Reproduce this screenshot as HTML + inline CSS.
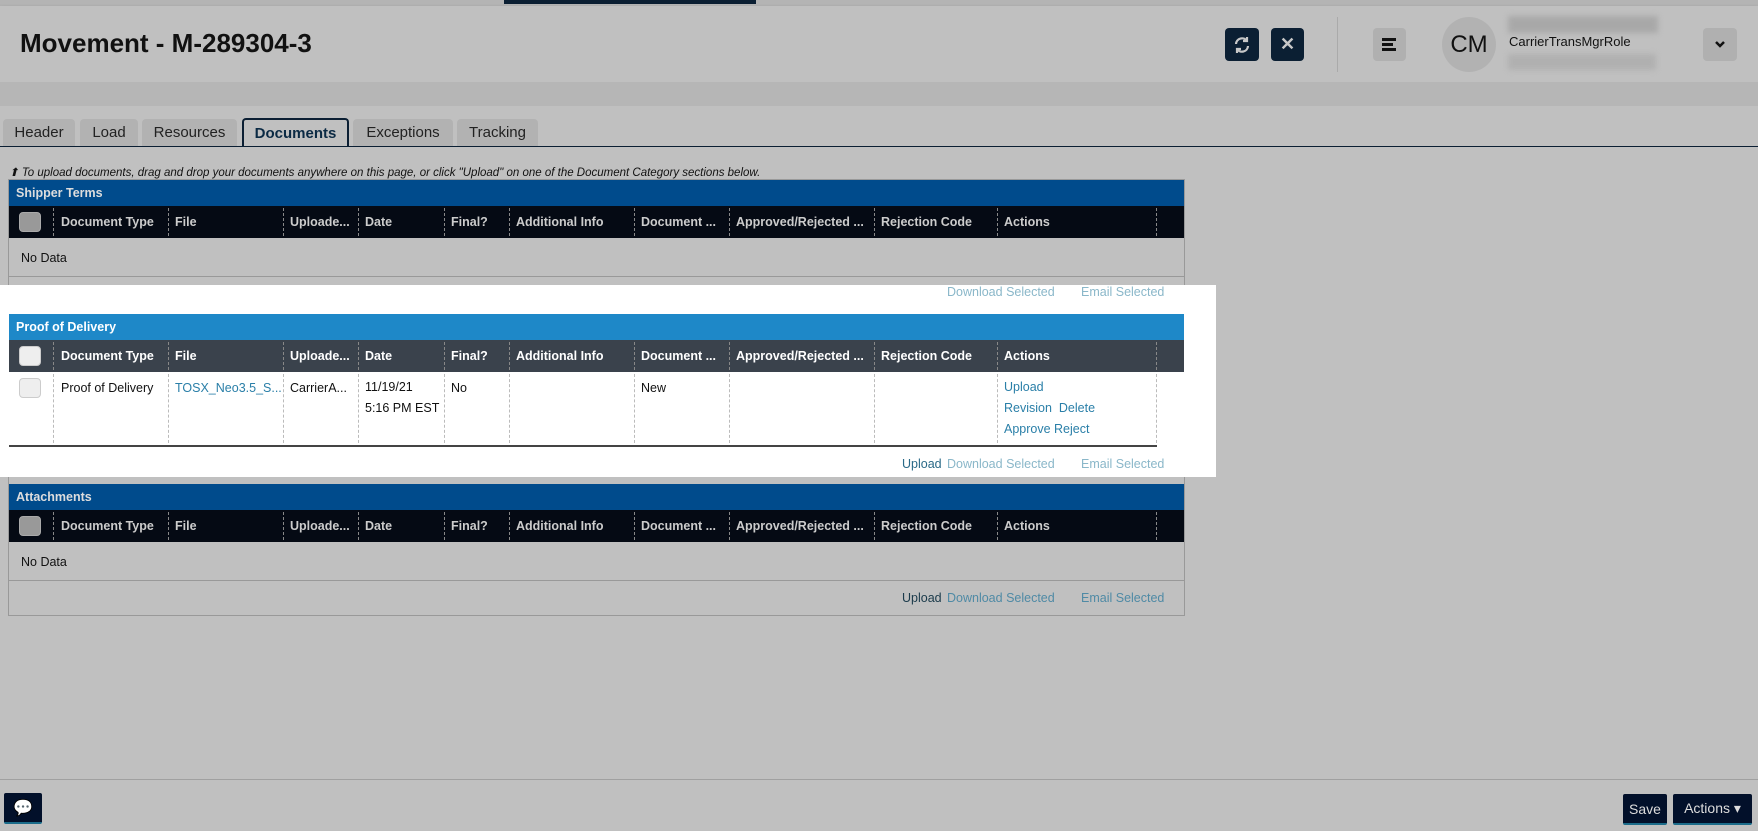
<!DOCTYPE html>
<html><head><meta charset="utf-8"><style>
*{box-sizing:border-box;margin:0;padding:0}
body{width:1758px;height:831px;background:#c0c0c0;font-family:"Liberation Sans",sans-serif;position:relative;overflow:hidden;color:#111}
.a{position:absolute}
.btn{position:absolute;border-radius:4px;background:#0b1f33;color:#c8c8c8;display:flex;align-items:center;justify-content:center}
.tab{position:absolute;top:119px;height:27px;background:#b2b2b2;border-radius:4px 4px 0 0;font-size:15px;color:#222;display:flex;align-items:center;justify-content:center}
.panel{position:absolute;left:9px;width:1175px}
.ph{height:26px;color:#ddd;font-weight:bold;font-size:12.5px;padding:6px 7px}
.ch{height:32px;position:relative;font-weight:bold;font-size:12.5px;color:#ccc}
.ch span,.row span{position:absolute;top:9px;white-space:nowrap}
.col{position:absolute;top:2px;bottom:2px;border-left:1px dashed #888}
.cb{position:absolute;left:10px;top:6px;width:22px;height:20px;border-radius:4px;background:#999;border:1px solid #aaa}
.row{position:relative;font-size:12.5px}
.ft{position:relative;height:30px;font-size:12.5px}
.ft span{position:absolute;top:10px}
.lk{color:#8ab7c9}
</style></head><body>
<div class="a" style="left:0;top:0;width:1758px;height:6px;background:#b4b4b4"></div>
<div class="a" style="left:504px;top:0;width:252px;height:4px;background:#0b1f33"></div>
<div class="a" style="left:0;top:6px;width:1758px;height:76px;background:#c0c0c0;box-shadow:0 2px 4px rgba(0,0,0,.25)"></div>
<div class="a" style="left:0;top:82px;width:1758px;height:24px;background:#b6b6b6"></div>
<div class="a" style="left:20px;top:28px;font-size:26px;font-weight:bold;color:#111">Movement - M-289304-3</div>
<div class="btn" style="left:1225px;top:28px;width:34px;height:33px"><svg width="18" height="18" viewBox="0 0 18 18" fill="none" stroke="#c8c8c8" stroke-width="2.2"><path d="M3 8a6 6 0 0 1 11-3M15 10a6 6 0 0 1-11 3"/><path d="M14 1v4h-4M4 17v-4h4"/></svg></div>
<div class="btn" style="left:1271px;top:28px;width:33px;height:33px;font-weight:bold;font-size:18px">✕</div>
<div class="a" style="left:1337px;top:17px;width:1px;height:55px;background:#aaa"></div>
<div class="a" style="left:1373px;top:28px;width:33px;height:33px;background:#b0b0b0;border-radius:4px"><div class="a" style="left:9px;top:10px;width:14px;height:3px;background:#111"></div><div class="a" style="left:9px;top:15px;width:11px;height:3px;background:#111"></div><div class="a" style="left:9px;top:20px;width:14px;height:3px;background:#111"></div></div>
<div class="a" style="left:1442px;top:17px;width:54px;height:55px;border-radius:50%;background:#b2b2b2;font-size:24px;display:flex;align-items:center;justify-content:center">CM</div>
<div class="a" style="left:1508px;top:16px;width:150px;height:17px;background:#a8a8a8;filter:blur(3px)"></div>
<div class="a" style="left:1509px;top:34px;font-size:13px">CarrierTransMgrRole</div>
<div class="a" style="left:1508px;top:54px;width:148px;height:16px;background:#b0b0b0;filter:blur(3px)"></div>
<div class="a" style="left:1703px;top:28px;width:34px;height:33px;background:#b0b0b0;border-radius:4px"><svg class="a" style="left:11px;top:12px" width="12" height="9" viewBox="0 0 12 9"><path d="M2 2l4 4 4-4" fill="none" stroke="#111" stroke-width="2.5"/></svg></div>

<div class="tab" style="left:3px;width:72px">Header</div>
<div class="tab" style="left:80px;width:58px">Load</div>
<div class="tab" style="left:142px;width:95px">Resources</div>
<div class="tab" style="left:242px;width:107px;background:#c0c0c0;border:2px solid #0b1f33;border-bottom:none;color:#0b2a44;font-weight:bold;height:29px;top:118px">Documents</div>
<div class="tab" style="left:353px;width:100px">Exceptions</div>
<div class="tab" style="left:457px;width:81px">Tracking</div>
<div class="a" style="left:0;top:146px;width:1758px;height:1px;background:#0b1f33"></div>
<div class="a" style="left:9px;top:165px;font-size:11.5px;font-style:italic">⬆ To upload documents, drag and drop your documents anywhere on this page, or click "Upload" on one of the Document Category sections below.</div>

<div class="a" style="left:8px;top:179px;width:1177px;height:437px;border:1px solid #999"></div>
<div class="a" style="left:0;top:285px;width:1216px;height:192px;background:#fff"></div>

<div class="panel" style="top:180px">
<div class="ph" style="background:#004b8c">Shipper Terms</div>
<div class="ch" style="background:#050a14"><div class="cb"></div>
<div class="col" style="left:44px"></div><span style="left:52px">Document Type</span>
<div class="col" style="left:159px"></div><span style="left:166px">File</span>
<div class="col" style="left:274px"></div><span style="left:281px">Uploade...</span>
<div class="col" style="left:349px"></div><span style="left:356px">Date</span>
<div class="col" style="left:435px"></div><span style="left:442px">Final?</span>
<div class="col" style="left:500px"></div><span style="left:507px">Additional Info</span>
<div class="col" style="left:625px"></div><span style="left:632px">Document ...</span>
<div class="col" style="left:720px"></div><span style="left:727px">Approved/Rejected ...</span>
<div class="col" style="left:865px"></div><span style="left:872px">Rejection Code</span>
<div class="col" style="left:988px"></div><span style="left:995px">Actions</span>
<div class="col" style="left:1147px"></div></div>
<div class="row" style="height:39px;border-bottom:1px solid #999"><span style="left:12px;top:13px">No Data</span></div>
<div class="ft"><span class="lk" style="left:938px;top:8px">Download Selected</span><span class="lk" style="left:1072px;top:8px">Email Selected</span></div>
</div>

<div class="panel" style="top:314px">
<div class="ph" style="background:#1e88c8;color:#fff">Proof of Delivery</div>
<div class="ch" style="background:#3a424c;color:#fff"><div class="cb" style="background:#eee;border-color:#ccc"></div>
<div class="col" style="left:44px"></div><span style="left:52px">Document Type</span>
<div class="col" style="left:159px"></div><span style="left:166px">File</span>
<div class="col" style="left:274px"></div><span style="left:281px">Uploade...</span>
<div class="col" style="left:349px"></div><span style="left:356px">Date</span>
<div class="col" style="left:435px"></div><span style="left:442px">Final?</span>
<div class="col" style="left:500px"></div><span style="left:507px">Additional Info</span>
<div class="col" style="left:625px"></div><span style="left:632px">Document ...</span>
<div class="col" style="left:720px"></div><span style="left:727px">Approved/Rejected ...</span>
<div class="col" style="left:865px"></div><span style="left:872px">Rejection Code</span>
<div class="col" style="left:988px"></div><span style="left:995px">Actions</span>
<div class="col" style="left:1147px"></div></div>
<div class="row" style="height:75px;width:1148px;border-bottom:2px solid #444">
<div class="cb" style="top:6px;background:#eee;border-color:#ccc"></div>
<div class="col" style="left:44px;border-color:#bbb"></div><span style="left:52px">Proof of Delivery</span>
<div class="col" style="left:159px;border-color:#bbb"></div><span style="left:166px;color:#2a7fa8">TOSX_Neo3.5_S...</span>
<div class="col" style="left:274px;border-color:#bbb"></div><span style="left:281px">CarrierA...</span>
<div class="col" style="left:349px;border-color:#bbb"></div><span style="left:356px;line-height:21px;top:5px">11/19/21<br>5:16 PM EST</span>
<div class="col" style="left:435px;border-color:#bbb"></div><span style="left:442px">No</span>
<div class="col" style="left:500px;border-color:#bbb"></div>
<div class="col" style="left:625px;border-color:#bbb"></div><span style="left:632px">New</span>
<div class="col" style="left:720px;border-color:#bbb"></div>
<div class="col" style="left:865px;border-color:#bbb"></div>
<div class="col" style="left:988px;border-color:#bbb"></div><span style="left:995px;line-height:21px;top:5px;color:#2a7fa8">Upload<br>Revision&nbsp; Delete<br>Approve Reject</span>
<div class="col" style="left:1147px;border-color:#bbb"></div></div>
<div class="ft"><span style="left:893px;color:#2a6a88">Upload</span><span class="lk" style="left:938px">Download Selected</span><span class="lk" style="left:1072px">Email Selected</span></div>
</div>

<div class="panel" style="top:484px">
<div class="ph" style="background:#004b8c">Attachments</div>
<div class="ch" style="background:#050a14"><div class="cb"></div>
<div class="col" style="left:44px"></div><span style="left:52px">Document Type</span>
<div class="col" style="left:159px"></div><span style="left:166px">File</span>
<div class="col" style="left:274px"></div><span style="left:281px">Uploade...</span>
<div class="col" style="left:349px"></div><span style="left:356px">Date</span>
<div class="col" style="left:435px"></div><span style="left:442px">Final?</span>
<div class="col" style="left:500px"></div><span style="left:507px">Additional Info</span>
<div class="col" style="left:625px"></div><span style="left:632px">Document ...</span>
<div class="col" style="left:720px"></div><span style="left:727px">Approved/Rejected ...</span>
<div class="col" style="left:865px"></div><span style="left:872px">Rejection Code</span>
<div class="col" style="left:988px"></div><span style="left:995px">Actions</span>
<div class="col" style="left:1147px"></div></div>
<div class="row" style="height:39px;border-bottom:1px solid #999"><span style="left:12px;top:13px">No Data</span></div>
<div class="ft"><span style="left:893px;color:#1a3a4a">Upload</span><span class="lk" style="left:938px;color:#4f8aa5">Download Selected</span><span class="lk" style="left:1072px;color:#4f8aa5">Email Selected</span></div>
</div>

<div class="a" style="left:0;top:779px;width:1758px;height:1px;background:#a0a0a0"></div>
<div class="btn" style="left:4px;top:793px;width:38px;height:31px;border-radius:2px;background:#02102a;border-bottom:2px solid #1b6c8a;font-size:16px">💬</div>
<div class="btn" style="left:1623px;top:794px;width:44px;height:31px;border-radius:2px;background:#02102a;border-bottom:2px solid #1b6c8a;font-size:14px;color:#ddd">Save</div>
<div class="btn" style="left:1673px;top:794px;width:79px;height:31px;border-radius:2px;background:#02102a;border-bottom:2px solid #1b6c8a;font-size:14px;color:#ddd">Actions ▾</div>
</body></html>
